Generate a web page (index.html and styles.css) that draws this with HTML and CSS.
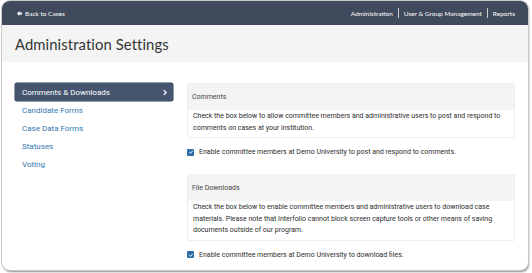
FILE: index.html
```html
<!DOCTYPE html>
<html>
<head>
<meta charset="utf-8">
<link rel="stylesheet" href="styles.css">
</head>
<body>
<div class="window">
  <div class="topbar">
    <a class="back"><svg class="back-icon" viewBox="0 0 10 10" width="5" height="5"><path d="M0 5 L5 0 L5 3 L10 3 L10 7 L5 7 L5 10 Z" fill="#fff"/></svg>Back to Cases</a>
    <nav class="topnav">
      <a>Administration</a><span class="sep"></span><a>User &amp; Group Management</a><span class="sep"></span><a>Reports</a>
    </nav>
  </div>
  <div class="pagehead">
    <h1>Administration Settings</h1>
  </div>
  <div class="main">
    <ul class="sidebar">
      <li class="item active">Comments &amp; Downloads<svg class="chev" viewBox="0 0 10 10" width="6" height="7"><path d="M3 1 L7 5 L3 9" fill="none" stroke="#fff" stroke-width="2.2"/></svg></li>
      <li class="item">Candidate Forms</li>
      <li class="item">Case Data Forms</li>
      <li class="item">Statuses</li>
      <li class="item">Voting</li>
    </ul>
    <div class="content">
      <section class="panel">
        <div class="panel-head">Comments</div>
        <div class="panel-body">Check the box below to allow committee members and administrative users to post and respond to comments on cases at your institution.</div>
      </section>
      <label class="check"><span class="box"><svg viewBox="0 0 10 10" width="6" height="6"><path d="M2 5 L4.2 7.2 L8 2.8" fill="none" stroke="#fff" stroke-width="1.6"/></svg></span>Enable committee members at Demo University to post and respond to comments.</label>
      <section class="panel panel2">
        <div class="panel-head">File Downloads</div>
        <div class="panel-body">Check the box below to enable committee members and administrative users to download case materials. Please note that Interfolio cannot block screen capture tools or other means of saving documents outside of our program.</div>
      </section>
      <label class="check"><span class="box"><svg viewBox="0 0 10 10" width="6" height="6"><path d="M2 5 L4.2 7.2 L8 2.8" fill="none" stroke="#fff" stroke-width="1.6"/></svg></span>Enable committee members at Demo University to download files.</label>
    </div>
  </div>
</div>
</body>
</html>
```
FILE: styles.css
```css
* { box-sizing: border-box; }
html, body { margin: 0; padding: 0; background: #fff; }
body { width: 532px; height: 273px; overflow: hidden; }
.window {
  margin: 1px 4px 0 2px;
  height: 269px;
  border-radius: 8px;
  overflow: hidden;
  background: #fff;
  box-shadow: 0 0 0 1px #c9c9c9, 1px 2px 2px rgba(0,0,0,0.45);
  display: flex;
  flex-direction: column;
  font-family: Roboto, "Liberation Sans", sans-serif;
}
.topbar {
  flex: none;
  height: 24px;
  background: #3f4a5c;
  display: flex;
  align-items: center;
  justify-content: space-between;
  padding: 0 13px 0 15px;
  font-family: Lato, "Liberation Sans", sans-serif;
  color: #fff;
  font-size: 6.5px;
}
.back { display: flex; align-items: center; gap: 3px; }
.topnav { display: flex; align-items: center; }
.sep { width: 1px; height: 10px; background: #c9ced6; margin: 0 5px; }
.pagehead {
  flex: none;
  height: 37px;
  background: #f4f4f4;
  display: flex;
  align-items: center;
  padding-left: 13px;
}
h1 {
  margin: 0;
  font-family: Lato, "Liberation Sans", sans-serif;
  font-weight: 400;
  font-size: 14.8px;
  color: #333;
  letter-spacing: 0.1px;
}
.main {
  flex: none;
  display: flex;
  padding: 21px 13px 0 13px;
  gap: 14px;
}
.sidebar {
  list-style: none;
  margin: 0;
  padding: 0;
  width: 158px;
  flex: none;
}
.item {
  height: 18px;
  display: flex;
  align-items: center;
  justify-content: space-between;
  padding: 0 5px 0 7px;
  font-size: 8px;
  color: #3478b0;
}
.item.active {
  background: #45556f;
  color: #fff;
  border-radius: 2px;
  box-shadow: 0 0 0 0.5px #2e3a4c;
}
.content { flex: 1; display: flex; flex-direction: column; }
.panel { border: 1px solid #efefef; border-radius: 2px; }
.panel-head {
  height: 26px;
  background: #f4f4f4;
  display: flex;
  align-items: center;
  padding-left: 4px;
  font-size: 7px;
  color: #444;
}
.panel-body {
  padding: 1px 8px 2.6px 5px;
  font-size: 7px;
  line-height: 11.7px;
  color: #2e2e2e;
  background: #fff;
}
.check {
  display: flex;
  align-items: center;
  height: 28px;
  font-size: 7px;
  color: #2e2e2e;
  padding-left: 0;
}
.box {
  width: 7px;
  height: 7px;
  background: #2c6ea8;
  border-radius: 1px;
  margin-right: 5px;
  display: flex;
  align-items: center;
  justify-content: center;
}
.box svg { display: block; }
.panel2 { margin-top: 8px; }
```
